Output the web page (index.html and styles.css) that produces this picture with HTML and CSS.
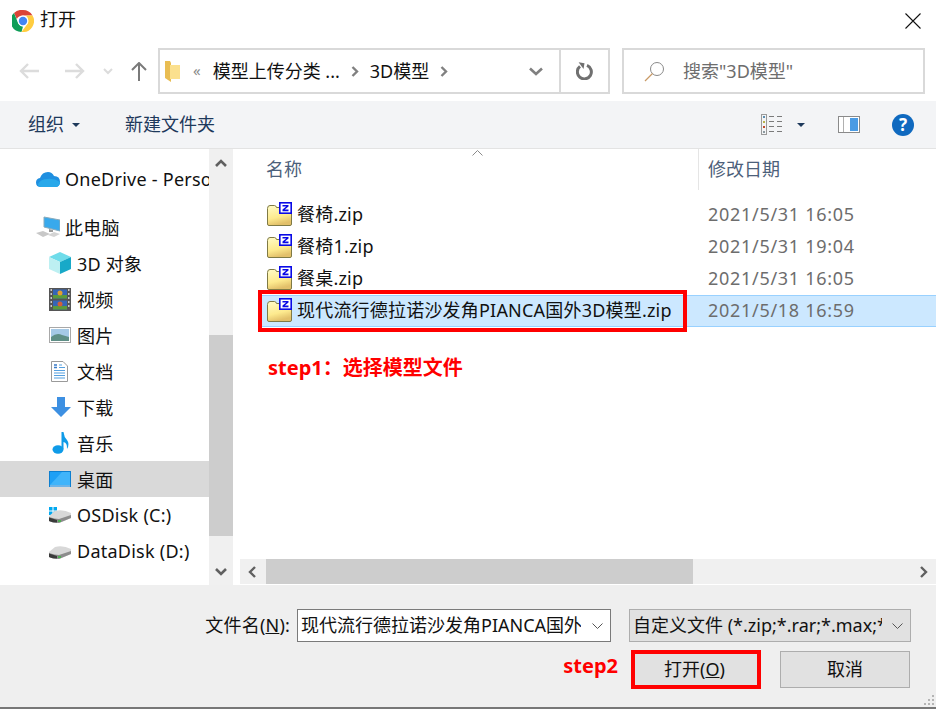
FILE: index.html
```html
<!DOCTYPE html>
<html lang="zh-CN">
<head>
  <meta charset="UTF-8">
  <title>打开</title>
  <link rel="stylesheet" href="styles.css">
</head>
<body>

<svg class="defs" width="0" height="0">
  <symbol id="zipfolder" viewBox="0 0 25 24">
    <path d="M0.5 6.5 Q0.5 3.5 3 3.5 L7.5 3.5 Q9 3.5 9.5 5.5 L23 5.5 Q24.5 5.5 24.5 7 L24.5 22 Q24.5 23.5 23 23.5 L2 23.5 Q0.5 23.5 0.5 22 Z" fill="url(#foldergrad)" stroke="#7f7a45"/>
    <rect x="12" y="0" width="13" height="12" fill="#fff"/>
    <rect x="12.8" y="0.8" width="11.4" height="10.4" fill="#fff" stroke="#0a0ae6" stroke-width="1.6"/>
    <path d="M15.5 3 H21.5 V4.6 L17.8 7.6 H21.5 V9.2 H15.5 V7.6 L19.2 4.6 H15.5 Z" fill="#0a0ae6"/>
  </symbol>
  <symbol id="disk" viewBox="0 0 22 14">
    <path d="M0 7 L6 2 Q14 0 22 4 L22 9 L10 14 Q4 14 0 12 Z" fill="#d8d8d8"/>
    <path d="M0 8 Q6 10 10 10 L22 6 L22 9 L10 14 Q4 14 0 12 Z" fill="#8c8c8c"/>
    <path d="M0 8.5 L8 11 L8 13.5 Q3 13.5 0 12 Z" fill="#3a3a3a"/>
    <rect x="9" y="11" width="3" height="2" fill="#4caf50"/>
  </symbol>
  <linearGradient id="foldergrad" x1="0" y1="0" x2="0.3" y2="1">
    <stop offset="0" stop-color="#fffcc8"/>
    <stop offset="0.65" stop-color="#fdea8e"/>
    <stop offset="1" stop-color="#e2c06a"/>
  </linearGradient>
</svg>

<div class="dialog">

  <div class="titlebar">
    <svg class="chrome-icon" width="22" height="22" viewBox="0 0 22 22">
      <path d="M11 0 A11 11 0 0 1 20.5 5.5 L11 5.5 Q6.5 5.5 4.8 9 L2 2.9 A11 11 0 0 1 11 0 Z" fill="#db4437"/>
      <path d="M2 2.9 L6.3 13.5 Q8 16.5 11 16.5 L9.5 21.9 A11 11 0 0 1 2 2.9 Z" fill="#0f9d58"/>
      <path d="M20.5 5.5 A11 11 0 0 1 9.5 21.9 L15.5 13.8 Q17 11 15.5 8 L14 5.5 Z" fill="#ffcd40"/>
      <circle cx="11" cy="11" r="5.4" fill="#fff"/>
      <circle cx="11" cy="11" r="4.2" fill="#4285f4"/>
    </svg>
    <span class="title">打开</span>
    <svg class="close-icon" width="16" height="16" viewBox="0 0 16 16"><path d="M0.5 0.5 L15.5 15.5 M15.5 0.5 L0.5 15.5" stroke="#111" stroke-width="1.1" fill="none"/></svg>
  </div>

  <div class="navbar">
    <div class="nav-buttons">
      <svg width="20" height="16" viewBox="0 0 20 16"><path d="M9 1 L2 8 L9 15 M2 8 H20" stroke="#dcdcdc" stroke-width="2.4" fill="none"/></svg>
      <svg width="20" height="16" viewBox="0 0 20 16"><path d="M11 1 L18 8 L11 15 M18 8 H0" stroke="#dcdcdc" stroke-width="2.4" fill="none"/></svg>
      <svg width="10" height="7" viewBox="0 0 10 7"><path d="M1 1 L5 5 L9 1" stroke="#dcdcdc" stroke-width="2" fill="none"/></svg>
      <svg width="16" height="19" viewBox="0 0 16 19"><path d="M1 8 L8 1 L15 8 M8 1 V19" stroke="#7a7a7a" stroke-width="2" fill="none"/></svg>
    </div>
    <div class="address">
      <svg class="addr-folder" width="15" height="21" viewBox="0 0 15 21">
        <path d="M0 0 H5 L6 2 V21 L0 17 Z" fill="#e9bd52"/>
        <path d="M5 4 H15 V18 H5 Z" fill="#fbe08e"/>
      </svg>
      <span class="addr-quote">«</span>
      <span class="addr-text">模型上传分类 ...</span>
      <svg class="addr-sep" width="8" height="11" viewBox="0 0 8 11"><path d="M1.5 1 L6 5.5 L1.5 10" stroke="#808080" stroke-width="2.4" fill="none"/></svg>
      <span class="addr-text">3D模型</span>
      <svg class="addr-sep" width="8" height="11" viewBox="0 0 8 11"><path d="M1.5 1 L6 5.5 L1.5 10" stroke="#808080" stroke-width="2.4" fill="none"/></svg>
      <svg class="addr-drop" width="14" height="9" viewBox="0 0 14 9"><path d="M1 1.5 L7 7 L13 1.5" stroke="#808080" stroke-width="2.6" fill="none"/></svg>
      <div class="addr-refresh">
        <svg width="18" height="18" viewBox="0 0 18 18"><path d="M11 3.4 A7 7 0 1 1 4 4.4" stroke="#707070" stroke-width="3" fill="none"/><path d="M2 0.8 L8 0.8 L8 6.5 Z" fill="#707070" transform="rotate(10 5 4)"/></svg>
      </div>
    </div>
    <div class="search">
      <svg width="21" height="21" viewBox="0 0 21 21">
        <circle cx="13" cy="8" r="6.5" stroke="#8a8a8a" fill="none"/>
        <path d="M8.5 12.5 L1 20" stroke="#c99a66" stroke-width="1.3"/>
      </svg>
      <span class="search-text">搜索"3D模型"</span>
    </div>
  </div>

  <div class="toolbar">
    <span class="tool-text">组织</span>
    <span class="caret org-caret"></span>
    <span class="tool-text new-folder">新建文件夹</span>
    <svg class="view-icon" width="22" height="21" viewBox="0 0 22 21">
      <rect x="0.5" y="0.5" width="5" height="20" fill="#f3f4f6" stroke="#9a9a9a"/>
      <rect x="2" y="2" width="2" height="2" fill="#5a8db0"/><rect x="2" y="7" width="2" height="2" fill="#b8b24c"/>
      <rect x="2" y="12" width="2" height="2" fill="#c0492c"/><rect x="2" y="17" width="2" height="2" fill="#8c9aa0"/>
      <path d="M8 2.5 H13 M16 2.5 H21 M8 7.5 H13 M16 7.5 H21 M8 12.5 H13 M16 12.5 H21 M8 17.5 H13 M16 17.5 H21" stroke="#7a7a7a"/>
    </svg>
    <span class="caret view-caret"></span>
    <svg class="pane-icon" width="22" height="17" viewBox="0 0 22 17">
      <rect x="0.5" y="0.5" width="21" height="16" fill="#fff" stroke="#8a8a8a"/>
      <rect x="12" y="2" width="8" height="13" fill="#4a9be4"/>
      <path d="M5.5 1 V16" stroke="#b0b0b0"/>
    </svg>
    <span class="help-icon">?</span>
  </div>

  <div class="main">
    <div class="sidebar">
      <div class="tree-item first">
        <svg class="tree-icon" width="24" height="16" viewBox="0 0 24 16">
          <path d="M5 16 Q0 16 0 11.5 Q0 7.5 4 7 Q6 1 12 1 Q16 1 18 5 Q24 5 24 11 Q24 16 19 16 Z" fill="#1f8fe0"/>
          <path d="M5 16 Q2 16 2 13 Q5 8 11 8 Q18 7 24 11 Q24 16 19 16 Z" fill="#28a8ea"/>
        </svg>
        <span>OneDrive - Personal</span>
      </div>
      <div class="tree-item gap-top">
        <svg class="tree-icon" width="24" height="22" viewBox="0 0 24 22">
          <path d="M8 1 L24 4 V15 L8 11 Z" fill="#38a9ec" stroke="#8ab"/>
          <path d="M13 13 L17 14 L17 16 L13 16 Z" fill="#9a9a9a"/>
          <path d="M0 17 L7 15 L14 18 L7 21 Z" fill="#c8c8c8"/>
          <path d="M12 19 L18 16 L24 18 L18 21 Z" fill="#d4d4d4"/>
        </svg>
        <span>此电脑</span>
      </div>
      <div class="tree-item sub">
        <svg class="tree-icon" width="22" height="22" viewBox="0 0 22 22">
          <path d="M11 0 L22 5 L11 10 L0 5 Z" fill="#6fdcea"/>
          <path d="M0 5 L11 10 V22 L0 17 Z" fill="#bdf0f2"/>
          <path d="M11 10 L22 5 V17 L11 22 Z" fill="#18a9c8"/>
        </svg>
        <span>3D 对象</span>
      </div>
      <div class="tree-item sub">
        <svg class="tree-icon" width="22" height="23" viewBox="0 0 22 23">
          <rect width="22" height="23" fill="#555"/>
          <rect x="4" y="1.5" width="14" height="9" fill="#3566b8"/>
          <rect x="4" y="12.5" width="14" height="9" fill="#3566b8"/>
          <rect x="4" y="7" width="14" height="3.5" fill="#5a9a3c"/>
          <rect x="4" y="18" width="14" height="3.5" fill="#5a9a3c"/>
          <circle cx="11" cy="5" r="2.5" fill="#e0a030"/>
          <circle cx="11" cy="16" r="2.5" fill="#d0603a"/>
          <path d="M1.5 2 H3 M1.5 6 H3 M1.5 10 H3 M1.5 14 H3 M1.5 18 H3 M19 2 H20.5 M19 6 H20.5 M19 10 H20.5 M19 14 H20.5 M19 18 H20.5" stroke="#eee" stroke-width="1.5"/>
        </svg>
        <span>视频</span>
      </div>
      <div class="tree-item sub">
        <svg class="tree-icon" width="22" height="16" viewBox="0 0 22 16">
          <rect x="0.5" y="0.5" width="21" height="15" fill="#fff" stroke="#a8a8a8"/>
          <rect x="2" y="2" width="18" height="12" fill="#a5c9e6"/>
          <path d="M2 10 Q8 5 13 8 L20 10 V14 H2 Z" fill="#5f8f86"/>
        </svg>
        <span>图片</span>
      </div>
      <div class="tree-item sub">
        <svg class="tree-icon doc" width="17" height="21" viewBox="0 0 17 21">
          <path d="M0.5 0.5 H12 L16.5 5 V20.5 H0.5 Z" fill="#fff" stroke="#9a9a9a"/>
          <path d="M3 4 H6 M3 6.5 H6" stroke="#3a7bc8" stroke-width="1.4"/>
          <path d="M8 4 H11 M8 6.5 H14 M3 9.5 H14 M3 12 H14 M3 14.5 H14 M3 17 H14" stroke="#55a0e0" stroke-width="1.1"/>
        </svg>
        <span>文档</span>
      </div>
      <div class="tree-item sub">
        <svg class="tree-icon arrow" width="20" height="20" viewBox="0 0 20 20">
          <path d="M6 0 H14 V10 H20 L10 20 L0 10 H6 Z" fill="#3d90e2"/>
        </svg>
        <span>下载</span>
      </div>
      <div class="tree-item sub">
        <svg class="tree-icon music" width="18" height="22" viewBox="0 0 18 22">
          <ellipse cx="6" cy="17.5" rx="5.5" ry="4.2" fill="#0f9be8"/>
          <path d="M9.5 0 H11.5 Q12 5 15 8 Q18 12 15 17 Q15.5 11 11.5 10 V17 H9.5 Z" fill="#0f9be8"/>
        </svg>
        <span>音乐</span>
      </div>
      <div class="tree-item sub active">
        <svg class="tree-icon" width="22" height="16" viewBox="0 0 22 16">
          <rect width="22" height="16" fill="#0d7fd0"/>
          <rect x="1" y="1" width="20" height="13" fill="#1fa0f5"/>
          <path d="M1 14 L13 1 H21 V14 Z" fill="#40b4fa"/>
          <path d="M1 15 H21" stroke="#cfeaff"/>
        </svg>
        <span>桌面</span>
      </div>
      <div class="tree-item sub">
        <svg class="tree-icon" width="22" height="16" viewBox="0 0 22 16">
          <rect x="0" y="0" width="3.5" height="3.5" fill="#00a8f0"/><rect x="4.5" y="0" width="3.5" height="3.5" fill="#00a8f0"/>
          <rect x="0" y="4.5" width="3.5" height="3.5" fill="#00a8f0"/><rect x="4.5" y="4.5" width="3.5" height="3.5" fill="#00a8f0"/>
          <use href="#disk" y="2" width="22" height="14"/>
        </svg>
        <span>OSDisk (C:)</span>
      </div>
      <div class="tree-item sub">
        <svg class="tree-icon" width="22" height="16" viewBox="0 0 22 16">
          <use href="#disk" y="2" width="22" height="14"/>
        </svg>
        <span>DataDisk (D:)</span>
      </div>
    </div>

    <div class="side-scroll">
      <svg width="12" height="8" viewBox="0 0 12 8"><path d="M1 7 L6 2 L11 7" stroke="#606060" stroke-width="2.6" fill="none"/></svg>
      <div class="side-track"><div class="side-thumb"></div></div>
      <svg width="12" height="8" viewBox="0 0 12 8"><path d="M1 1 L6 6 L11 1" stroke="#606060" stroke-width="2.6" fill="none"/></svg>
    </div>

    <div class="files">
      <div class="file-head">
        <div class="col-name"><span>名称</span></div>
        <div class="col-date"><span>修改日期</span></div>
        <svg class="sort-caret" width="11" height="6" viewBox="0 0 11 6"><path d="M0.5 5.5 L5.5 0.5 L10.5 5.5" stroke="#8a8a8a" fill="none"/></svg>
      </div>
      <div class="file-list">
        <div class="file-row">
          <div class="file-name"><svg width="25" height="24"><use href="#zipfolder"/></svg><span>餐椅.zip</span></div>
          <div class="file-date">2021/5/31 16:05</div>
        </div>
        <div class="file-row">
          <div class="file-name"><svg width="25" height="24"><use href="#zipfolder"/></svg><span>餐椅1.zip</span></div>
          <div class="file-date">2021/5/31 19:04</div>
        </div>
        <div class="file-row">
          <div class="file-name"><svg width="25" height="24"><use href="#zipfolder"/></svg><span>餐桌.zip</span></div>
          <div class="file-date">2021/5/31 16:05</div>
        </div>
        <div class="file-row selected">
          <div class="file-name"><svg width="25" height="24"><use href="#zipfolder"/></svg><span>现代流行德拉诺沙发角PIANCA国外3D模型.zip</span></div>
          <div class="file-date">2021/5/18 16:59</div>
        </div>
        <div class="note step1">step1：选择模型文件</div>
        <div class="red-box file-box"></div>
      </div>
      <div class="h-scroll">
        <svg width="8" height="12" viewBox="0 0 8 12"><path d="M7 1 L2 6 L7 11" stroke="#606060" stroke-width="2.4" fill="none"/></svg>
        <div class="h-track"><div class="h-thumb"></div></div>
        <svg width="8" height="12" viewBox="0 0 8 12"><path d="M1 1 L6 6 L1 11" stroke="#606060" stroke-width="2.4" fill="none"/></svg>
      </div>
    </div>
  </div>

  <div class="footer">
    <div class="form-row">
      <span class="name-label">文件名(<u>N</u>):</span>
      <div class="name-input">
        <span class="name-value">现代流行德拉诺沙发角PIANCA国外3D模型.zip</span>
        <svg width="11" height="6" viewBox="0 0 11 6"><path d="M0.5 0.5 L5.5 5.5 L10.5 0.5" stroke="#555" fill="none"/></svg>
      </div>
      <div class="type-select">
        <span class="name-value">自定义文件 (*.zip;*.rar;*.max;*.skp;*.obj)</span>
        <svg width="11" height="6" viewBox="0 0 11 6"><path d="M0.5 0.5 L5.5 5.5 L10.5 0.5" stroke="#555" fill="none"/></svg>
      </div>
    </div>
    <div class="button-row">
      <span class="note step2">step2</span>
      <div class="btn open-btn"><span>打开(<u>O</u>)</span></div>
      <div class="btn"><span>取消</span></div>
    </div>
    <svg class="grip" width="12" height="12" viewBox="0 0 12 12"><path d="M9 1 h2 v2 h-2z M5 5 h2 v2 h-2z M9 5 h2 v2 h-2z M1 9 h2 v2 h-2z M5 9 h2 v2 h-2z M9 9 h2 v2 h-2z" fill="#b4b4b4"/></svg>
  </div>
  <div class="bottom-edge"></div>
</div>

</body>
</html>
```

FILE: styles.css
```css
html, body {
  margin: 0;
  height: 100%;
}
body {
  font-family: "Noto Sans", "Noto Sans CJK SC", sans-serif;
  font-size: 18px;
  color: #111;
  background-color: #fff;
  overflow: hidden;
}
.defs {
  position: absolute;
}
.dialog {
  width: 936px;
  height: 709px;
  display: flex;
  flex-direction: column;
}

.title, .addr-text, .search-text, .tool-text, .file-head span,
.name-label, .name-value, .btn span {
  padding-bottom: 3px;
}
.tree-item span {
  padding-bottom: 1px;
}
.file-name span {
  padding-bottom: 4px;
}
.file-date {
  padding-bottom: 2px;
}

/* title bar */
.titlebar {
  height: 41px;
  flex: none;
  display: flex;
  align-items: center;
  padding: 0 15px 0 12px;
}
.title {
  margin-left: 6px;
  line-height: 1;
}
.close-icon {
  margin-left: auto;
}

/* back/forward, address and search */
.navbar {
  height: 60px;
  flex: none;
  display: flex;
  box-sizing: border-box;
  padding: 7px 11px 7px 0;
}
.nav-buttons {
  width: 158px;
  flex: none;
  display: flex;
  align-items: center;
  padding-left: 19px;
  box-sizing: border-box;
}
.nav-buttons svg:nth-child(2) {
  margin-left: 26px;
}
.nav-buttons svg:nth-child(3) {
  margin-left: 18px;
}
.nav-buttons svg:nth-child(4) {
  margin-left: 18px;
}
.address, .search {
  box-sizing: border-box;
  height: 46px;
  border: 2px solid #d9d9d9;
  display: flex;
  align-items: center;
}
.address {
  width: 452px;
  padding-left: 5px;
}
.addr-folder {
  margin-right: 13px;
}
.addr-quote {
  font-size: 15px;
  color: #8a8a8a;
  margin-right: 12px;
  margin-bottom: 3px;
}
.addr-text {
  white-space: nowrap;
}
.addr-sep {
  margin: 0 11px 0 11px;
}
.addr-drop {
  margin-left: auto;
  margin-right: 16px;
}
.addr-refresh {
  width: 49px;
  height: 100%;
  flex: none;
  border-left: 2px solid #d9d9d9;
  box-sizing: border-box;
  display: flex;
  align-items: center;
  justify-content: center;
}
.search {
  width: 303px;
  margin-left: 12px;
  padding-left: 20px;
}
.search-text {
  margin-left: 18px;
  color: #6d6d6d;
}

/* command bar */
.toolbar {
  height: 48px;
  flex: none;
  box-sizing: border-box;
  background-color: #f3f4f6;
  border-bottom: 1px solid #e3e3e3;
  display: flex;
  align-items: center;
  padding-left: 28px;
  color: #1e395b;
}
.caret {
  width: 0;
  height: 0;
  border-left: 4px solid transparent;
  border-right: 4px solid transparent;
  border-top: 4px solid #1e395b;
}
.org-caret {
  margin-left: 8px;
}
.new-folder {
  margin-left: 45px;
}
.view-icon {
  margin-left: 546px;
}
.view-caret {
  margin-left: 14px;
}
.pane-icon {
  margin-left: 33px;
}
.help-icon {
  width: 22px;
  height: 22px;
  margin-left: 32px;
  border-radius: 50%;
  background-color: #0f69bf;
  color: #fff;
  font-size: 17px;
  font-weight: bold;
  line-height: 22px;
  text-align: center;
}

/* navigation tree */
.main {
  height: 436px;
  flex: none;
  display: flex;
}
.sidebar {
  width: 209px;
  flex: none;
  overflow: hidden;
  padding-top: 12px;
  box-sizing: border-box;
}
.tree-item {
  height: 36px;
  display: flex;
  align-items: center;
  padding-left: 36px;
  white-space: nowrap;
  letter-spacing: 0.25px;
}
.tree-item.gap-top {
  margin-top: 12px;
}
.tree-item .tree-icon {
  flex: none;
  margin-right: 5px;
}
.tree-item.sub {
  padding-left: 49px;
}
.tree-item.sub .tree-icon {
  margin-right: 6px;
}
.tree-item.sub .tree-icon.doc {
  margin-left: 2px;
  margin-right: 9px;
}
.tree-item.sub .tree-icon.arrow {
  margin-left: 2px;
  margin-right: 6px;
}
.tree-item.sub .tree-icon.music {
  margin-left: 3px;
  margin-right: 7px;
}
.tree-item.active {
  background-color: #d9d9d9;
}
.side-scroll {
  width: 24px;
  flex: none;
  background-color: #f0f0f0;
  display: flex;
  flex-direction: column;
  align-items: center;
  padding-top: 10px;
  padding-bottom: 9px;
  box-sizing: border-box;
}
.side-track {
  flex: 1;
  width: 100%;
  margin: 4px 0 4px;
}
.side-thumb {
  width: 100%;
  height: 201px;
  margin-top: 164px;
  background-color: #cdcdcd;
}

/* file list */
.files {
  flex: 1;
  margin-left: 7px;
  min-width: 0;
  display: flex;
  flex-direction: column;
}
.file-head {
  height: 41px;
  flex: none;
  display: flex;
  align-items: center;
  position: relative;
  color: #4c607a;
}
.col-name {
  width: 458px;
  height: 100%;
  display: flex;
  align-items: center;
  padding-left: 26px;
  box-sizing: border-box;
}
.col-date {
  height: 100%;
  display: flex;
  align-items: center;
  padding-left: 9px;
  border-left: 1px solid #e5e5e5;
}
.sort-caret {
  position: absolute;
  left: 232px;
  top: 1px;
}
.file-list {
  flex: 1;
  position: relative;
  padding-top: 9px;
}
.file-row {
  height: 32px;
  display: flex;
  align-items: center;
  margin-left: 20px;
  box-sizing: border-box;
}
.file-name {
  width: 438px;
  flex: none;
  display: flex;
  align-items: center;
  padding-left: 7px;
  box-sizing: border-box;
  white-space: nowrap;
  letter-spacing: 0.2px;
}
.file-name svg {
  margin: 0 5px 2px 0;
  flex: none;
}
.file-date {
  padding-left: 10px;
  color: #6d6d6d;
  letter-spacing: 0.7px;
}
.file-row.selected {
  background-color: #cce8ff;
  border-top: 1px solid #99d1ff;
  border-bottom: 1px solid #99d1ff;
}
.note {
  color: #f00;
  font-weight: bold;
  font-size: 20px;
}
.step1 {
  margin: 27px 0 0 28px;
  line-height: 28px;
}
.red-box {
  border: 4px solid #f00;
  box-sizing: border-box;
}
.file-box {
  position: absolute;
  left: 18px;
  top: 100px;
  width: 429px;
  height: 42px;
}
.h-scroll {
  height: 25px;
  flex: none;
  background-color: #f0f0f0;
  display: flex;
  align-items: center;
  padding: 0 8px;
  margin-bottom: 1px;
}
.h-track {
  flex: 1;
  height: 100%;
  margin: 0 8px;
}
.h-thumb {
  width: 427px;
  height: 100%;
  margin-left: 2px;
  background-color: #cdcdcd;
}

/* file name, type and buttons */
.footer {
  flex: 1;
  background-color: #efefef;
  box-sizing: border-box;
  padding: 24px 26px 0 0;
  position: relative;
}
.form-row {
  display: flex;
  justify-content: flex-end;
  align-items: center;
  margin-right: -1px;
}
.name-label {
  margin-right: 7px;
  letter-spacing: 0.2px;
}
.name-input, .type-select {
  height: 33px;
  box-sizing: border-box;
  display: flex;
  align-items: center;
  padding: 0 7px 0 3px;
  overflow: hidden;
}
.name-input {
  width: 314px;
  background-color: #fff;
  border: 1px solid #7a7a7a;
}
.type-select {
  width: 282px;
  margin-left: 18px;
  background-color: #e1e1e1;
  border: 1px solid #adadad;
}
.name-value {
  flex: 1;
  min-width: 0;
  overflow: hidden;
  white-space: nowrap;
  margin-right: 8px;
}
.name-input .name-value {
  margin-right: 11px;
}
.type-select .name-value {
  margin-right: 10px;
}
.name-input svg, .type-select svg {
  flex: none;
}
.button-row {
  display: flex;
  justify-content: flex-end;
  align-items: center;
  margin-top: 8px;
  position: relative;
}
.btn {
  width: 130px;
  height: 37px;
  box-sizing: border-box;
  background-color: #e1e1e1;
  border: 1px solid #adadad;
  display: flex;
  align-items: center;
  justify-content: center;
}
.open-btn {
  border: 4px solid #f00;
  height: 39px;
  margin-right: 19px;
  padding-right: 3px;
}
.step2 {
  margin-right: 13px;
  margin-bottom: 8px;
}
.grip {
  position: absolute;
  right: 1px;
  bottom: 1px;
}
.bottom-edge {
  height: 2px;
  flex: none;
  background-color: #777;
}
```
